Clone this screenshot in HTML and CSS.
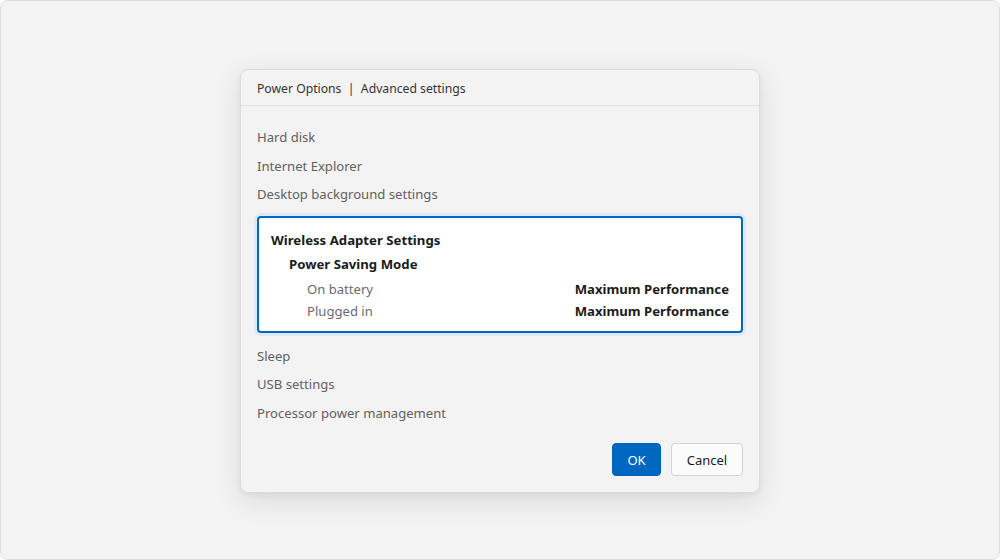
FILE: index.html
```
<!DOCTYPE html>
<html>
<head>
<meta charset="utf-8">
<link rel="stylesheet" href="styles.css">
</head>
<body>
<div class="frame">
  <div class="dialog">
    <div class="header">Power Options&nbsp; | &nbsp;Advanced settings</div>
    <div class="content">
      <ul class="list">
        <li class="item">Hard disk</li>
        <li class="item">Internet Explorer</li>
        <li class="item">Desktop background settings</li>
      </ul>
      <div class="selected">
        <div class="group">Wireless Adapter Settings</div>
        <div class="sub">Power Saving Mode</div>
        <div class="row first"><span class="label">On battery</span><span class="value">Maximum Performance</span></div>
        <div class="row"><span class="label">Plugged in</span><span class="value">Maximum Performance</span></div>
      </div>
      <ul class="list">
        <li class="item">Sleep</li>
        <li class="item">USB settings</li>
        <li class="item">Processor power management</li>
      </ul>
      <div class="buttons">
        <button class="btn primary">OK</button>
        <button class="btn secondary">Cancel</button>
      </div>
    </div>
  </div>
</div>
</body>
</html>
```
FILE: styles.css
```
* { box-sizing: border-box; }
html, body { margin: 0; padding: 0; }
body {
  width: 1000px;
  height: 560px;
  background: #ffffff;
  font-family: "Noto Sans", "Open Sans", sans-serif;
}
.frame {
  width: 1000px;
  height: 560px;
  background: #f3f3f3;
  border: 1px solid #dedede;
  border-radius: 8px;
  display: flex;
  justify-content: center;
  padding-top: 68px;
}
.dialog {
  width: 520px;
  height: 424px;
  background: #f3f3f3;
  border: 1px solid #dcdcdc;
  border-radius: 8px;
  box-shadow: 0 8px 28px rgba(0,0,0,0.10), 0 2px 6px rgba(0,0,0,0.05);
  display: flex;
  flex-direction: column;
}
.header {
  height: 36px;
  border-bottom: 1px solid #e2e2e2;
  padding: 1px 16px 0;
  display: flex;
  align-items: center;
  font-size: 12.2px;
  color: #333333;
}
.content {
  padding: 17px 16px 16px;
  display: flex;
  flex-direction: column;
}
.list { list-style: none; margin: 0; padding: 0; }
.item {
  height: 28.5px;
  line-height: 28.5px;
  font-size: 13.1px;
  color: #616161;
}
.selected {
  margin: 7px 0 9px;
  background: #ffffff;
  border: 2px solid #0067c0;
  border-radius: 4px;
  box-shadow: 0 0 0 3px #dfe9f3;
  padding: 10px 12px 9px;
}
.group {
  height: 24px;
  line-height: 24px;
  font-size: 13.2px;
  font-weight: 700;
  color: #1b1b1b;
}
.sub {
  height: 24px;
  line-height: 24px;
  font-size: 13.2px;
  font-weight: 700;
  color: #1b1b1b;
  padding-left: 18px;
}
.row {
  height: 22px;
  line-height: 22px;
  display: flex;
  justify-content: space-between;
  padding-left: 36px;
  font-size: 13.1px;
}
.row.first { margin-top: 2px; }
.label { color: #6b6b6b; }
.value { color: #1b1b1b; font-weight: 700; font-size: 13.15px; }
.buttons {
  display: flex;
  justify-content: flex-end;
  gap: 10px;
  margin-top: 16px;
}
.btn {
  height: 33px;
  border-radius: 4px;
  font-family: inherit;
  font-size: 13px;
  padding: 0;
}
.primary {
  width: 49px;
  background: #0067c0;
  color: #ffffff;
  border: 1px solid #0062b8;
}
.secondary {
  width: 72px;
  background: #fbfbfb;
  color: #1b1b1b;
  border: 1px solid #d3d3d3;
}
```
